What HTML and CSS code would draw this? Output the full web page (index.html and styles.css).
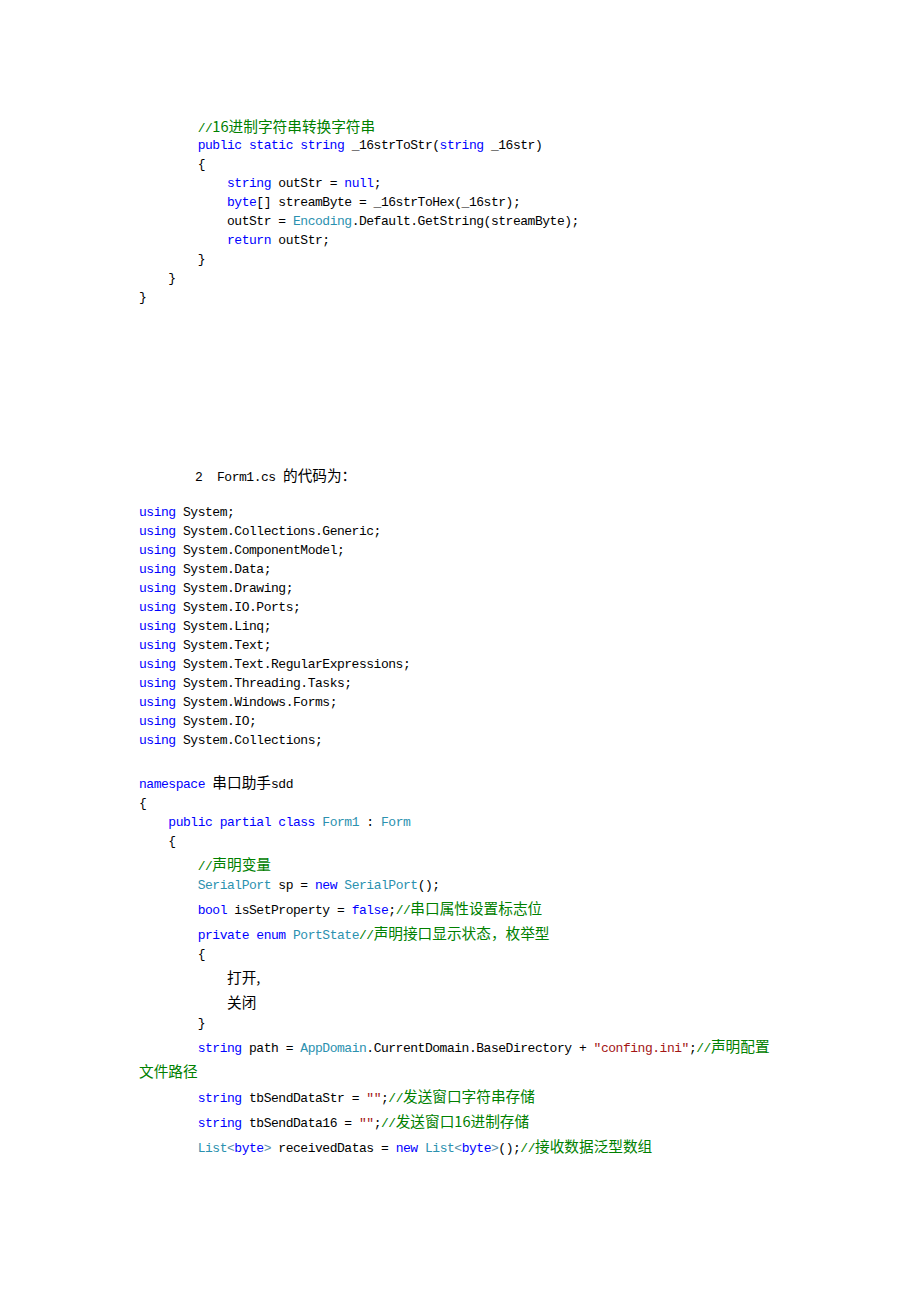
FILE: index.html
```
<!DOCTYPE html>
<html lang="zh-CN">
<head>
    <meta charset="UTF-8">
    <title>Form1.cs 的代码</title>
    <link rel="stylesheet" href="styles.css">
</head>
<body>
    <div class="doc">
        <!-- 上一段代码的结尾 -->
        <div class="code first">
<div class="ln lc t21">        <span class="cm">//<span class="cn">16进制字符串转换字符串</span></span></div>
<div class="ln">        <span class="kw">public static string</span> _16strToStr(<span class="kw">string</span> _16str)</div>
<div class="ln">        {</div>
<div class="ln">            <span class="kw">string</span> outStr = <span class="kw">null</span>;</div>
<div class="ln">            <span class="kw">byte</span>[] streamByte = _16strToHex(_16str);</div>
<div class="ln">            outStr = <span class="ty">Encoding</span>.Default.GetString(streamByte);</div>
<div class="ln">            <span class="kw">return</span> outStr;</div>
<div class="ln">        }</div>
<div class="ln">    }</div>
<div class="ln">}</div>
        </div>

        <div class="ln lc heading">2  Form1.cs <span class="cn">的代码为：</span></div>

        <!-- using 部分 -->
        <div class="code usings">
<div class="ln"><span class="kw">using</span> System;</div>
<div class="ln"><span class="kw">using</span> System.Collections.Generic;</div>
<div class="ln"><span class="kw">using</span> System.ComponentModel;</div>
<div class="ln"><span class="kw">using</span> System.Data;</div>
<div class="ln"><span class="kw">using</span> System.Drawing;</div>
<div class="ln"><span class="kw">using</span> System.IO.Ports;</div>
<div class="ln"><span class="kw">using</span> System.Linq;</div>
<div class="ln"><span class="kw">using</span> System.Text;</div>
<div class="ln"><span class="kw">using</span> System.Text.RegularExpressions;</div>
<div class="ln"><span class="kw">using</span> System.Threading.Tasks;</div>
<div class="ln"><span class="kw">using</span> System.Windows.Forms;</div>
<div class="ln"><span class="kw">using</span> System.IO;</div>
<div class="ln"><span class="kw">using</span> System.Collections;</div>
        </div>

        <!-- 命名空间部分 -->
        <div class="code ns">
<div class="ln lc"><span class="kw">namespace</span> <span class="cn">串口助手</span>sdd</div>
<div class="ln">{</div>
<div class="ln">    <span class="kw">public partial class</span> <span class="ty">Form1</span> : <span class="ty">Form</span></div>
<div class="ln">    {</div>
<div class="ln lc">        <span class="cm">//<span class="cn">声明变量</span></span></div>
<div class="ln">        <span class="ty">SerialPort</span> sp = <span class="kw">new</span> <span class="ty">SerialPort</span>();</div>
<div class="ln lc">        <span class="kw">bool</span> isSetProperty = <span class="kw">false</span>;<span class="cm">//<span class="cn">串口属性设置标志位</span></span></div>
<div class="ln lc">        <span class="kw">private enum</span> <span class="ty">PortState</span><span class="cm">//<span class="cn">声明接口显示状态，枚举型</span></span></div>
<div class="ln">        {</div>
<div class="ln lc">            <span class="cn">打开,</span></div>
<div class="ln lc">            <span class="cn">关闭</span></div>
<div class="ln">        }</div>
<div class="ln lc">        <span class="kw">string</span> path = <span class="ty">AppDomain</span>.CurrentDomain.BaseDirectory + <span class="st">"confing.ini"</span>;<span class="cm">//<span class="cn">声明配置</span></span></div>
<div class="ln lc"><span class="cm cn">文件路径</span></div>
<div class="ln lc">        <span class="kw">string</span> tbSendDataStr = <span class="st">""</span>;<span class="cm">//<span class="cn">发送窗口字符串存储</span></span></div>
<div class="ln lc">        <span class="kw">string</span> tbSendData16 = <span class="st">""</span>;<span class="cm">//<span class="cn">发送窗口16进制存储</span></span></div>
<div class="ln lc">        <span class="ty">List</span><span class="pt">&lt;</span><span class="kw">byte</span><span class="pt">&gt;</span> receivedDatas = <span class="kw">new</span> <span class="ty">List</span><span class="pt">&lt;</span><span class="kw">byte</span><span class="pt">&gt;</span>();<span class="cm">//<span class="cn">接收数据泛型数组</span></span></div>
        </div>
    </div>
</body>
</html>
```
FILE: styles.css
```
body {
    margin: 0;
    background-color: #ffffff;
    color: #000000;
}
.doc {
    width: 781px;
    padding: 115px 0 0 139px;
    box-sizing: border-box;
    font-family: "Liberation Mono", "Noto Sans CJK SC", monospace;
    font-size: 13px;
    letter-spacing: -0.47px;
}
.ln {
    white-space: pre;
    height: 19px;
    line-height: 19px;
}
.lc {
    height: 25px;
    line-height: 25px;
}
.t21 {
    height: 21px;
    line-height: 21px;
}
.heading {
    margin-top: 155px;
    padding-left: 56px;
}
.usings {
    margin-top: 16px;
}
.ns {
    margin-top: 19px;
}
.cn {
    font-family: "Noto Sans CJK SC", sans-serif;
    font-size: 14.67px;
    letter-spacing: 0;
}
.kw {
    color: #0000ff;
}
.ty {
    color: #2b91af;
}
.cm {
    color: #008000;
}
.st {
    color: #a31515;
}
.pt {
    color: #5a8fa8;
}
```
